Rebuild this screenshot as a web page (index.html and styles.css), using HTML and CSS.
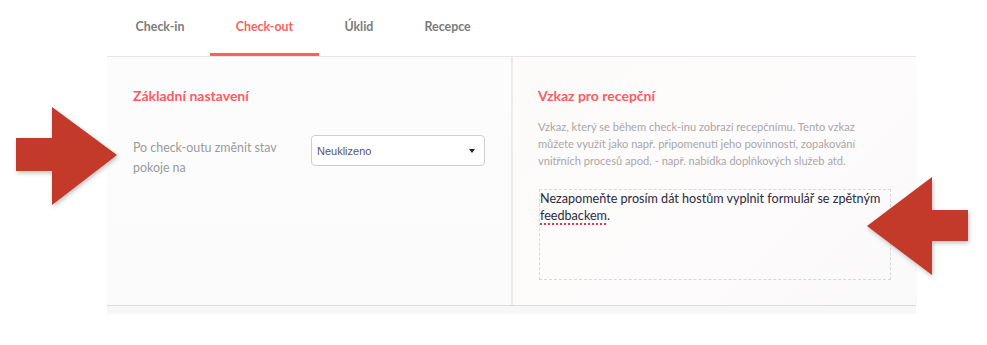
FILE: index.html
```html
<!DOCTYPE html>
<html lang="cs">
  <head>
    <meta charset="UTF-8" />
    <meta name="viewport" content="width=device-width,initial-scale=1.0" />
    <title>Nastavení | Check-out</title>
    <link rel="stylesheet" href="styles.css">
  </head>
  <body>
    <div class="page">
      <nav class="tabs">
        <a class="tab" href="#">Check-in</a>
        <a class="tab active" href="#">Check-out</a>
        <a class="tab" href="#">Úklid</a>
        <a class="tab" href="#">Recepce</a>
      </nav>
      <div class="panel">
        <section class="col col-left">
          <h3 class="col-title">Základní nastavení</h3>
          <div class="field-row">
            <label class="field-label" for="room-state">Po check-outu změnit stav pokoje na</label>
            <div class="select">
              <span>Neuklizeno</span>
              <span class="caret"></span>
            </div>
          </div>
        </section>
        <section class="col col-right">
          <h3 class="col-title">Vzkaz pro recepční</h3>
          <p class="col-desc">
            Vzkaz, který se během check-inu zobrazí recepčnímu. Tento vzkaz
            můžete využít jako např. připomenutí jeho povinností, zopakování
            vnitřních procesů apod. - např. nabídka doplňkových služeb atd.
          </p>
          <div class="message">Nezapomeňte prosím dát hostům vyplnit formulář se zpětným <span class="typo">feedbackem</span>.</div>
        </section>
      </div>
      <div class="panel-foot"></div>

      <svg class="arrow arrow-right" width="110" height="104" viewBox="0 0 110 104">
        <polygon points="1,31 37,31 37,0 102,48 37,98 37,64 1,64" fill="#c3392a" />
      </svg>
      <svg class="arrow arrow-left" width="110" height="104" viewBox="0 0 110 104">
        <polygon points="101,33 65,33 65,0 0,49 65,98 65,64 101,64" fill="#c3392a" />
      </svg>
    </div>
  </body>
</html>
```

FILE: styles.css
```css
body {
  margin: 0;
  background: #fff;
  font-family: "Lato", "Open Sans", sans-serif;
  color: #333;
}
.page {
  position: relative;
  width: 987px;
  height: 345px;
  overflow: hidden;
}
.tabs {
  display: flex;
  height: 56px;
  padding-left: 110px;
}
.tab {
  display: flex;
  align-items: center;
  padding: 0 25.6px 1px 25.6px;
  font-size: 12.4px;
  font-weight: 700;
  color: #7b7b7b;
  text-decoration: none;
  box-sizing: border-box;
  border-bottom: 3px solid transparent;
}
.tab.active {
  color: #ff5f5f;
  border-bottom-color: #ff5f5f;
}
.panel {
  display: flex;
  margin-left: 107px;
  width: 809px;
  height: 248px;
  border-top: 1px solid #e6e6e6;
  border-bottom: 1px solid #dcdcdc;
  background: linear-gradient(180deg, #fdfcfc 0%, #fbfbfc 100%);
}
.panel-foot {
  margin-left: 107px;
  width: 809px;
  height: 8px;
  background: #f8f7f8;
}
.col {
  box-sizing: border-box;
  padding: 30px 26px 0 26px;
}
.col-left {
  width: 406px;
  border-right: 2px solid #ececec;
}
.col-right {
  flex: 1;
  background: linear-gradient(135deg, #fdfafa 0%, #fdfbfb 60%, #faf9f9 100%);
  padding-left: 25px;
}
.col-title {
  margin: 0 0 13px 0;
  font-size: 14px;
  font-weight: 700;
  color: #ff5a5f;
  line-height: 18px;
}
.field-row {
  display: flex;
  align-items: flex-start;
  margin-top: 30px;
}
.field-label {
  width: 178px;
  font-size: 12.4px;
  line-height: 20px;
  color: #9a9a9a;
  padding-top: 3px;
}
.select {
  display: flex;
  align-items: center;
  justify-content: space-between;
  width: 174px;
  height: 31px;
  box-sizing: border-box;
  padding: 0 9px 0 5px;
  border: 1px solid #cfcfcf;
  border-radius: 4px;
  background: #fff;
  font-family: "Liberation Sans", Arial, sans-serif;
  font-size: 11px;
  color: #5a5270;
}
.caret {
  width: 0;
  height: 0;
  border-left: 3px solid transparent;
  border-right: 3px solid transparent;
  border-top: 4px solid #222;
}
.col-desc {
  margin: 0;
  font-size: 11.1px;
  line-height: 17px;
  color: #a8a8a8;
}
.message {
  margin-top: 20px;
  margin-left: 1px;
  width: 352px;
  height: 91px;
  box-sizing: border-box;
  border: 1px dashed #d8d8d8;
  padding: 0;
  font-size: 12.6px;
  line-height: 17px;
  color: #2a2a40;
}
.typo {
  text-decoration: underline dotted #e0393e;
  text-decoration-thickness: 2px;
  text-underline-offset: 3px;
}
.arrow {
  position: absolute;
  filter: drop-shadow(1px 2px 2px rgba(0, 0, 0, 0.25));
}
.arrow-right {
  left: 15px;
  top: 107px;
}
.arrow-left {
  left: 867px;
  top: 177px;
}
```
